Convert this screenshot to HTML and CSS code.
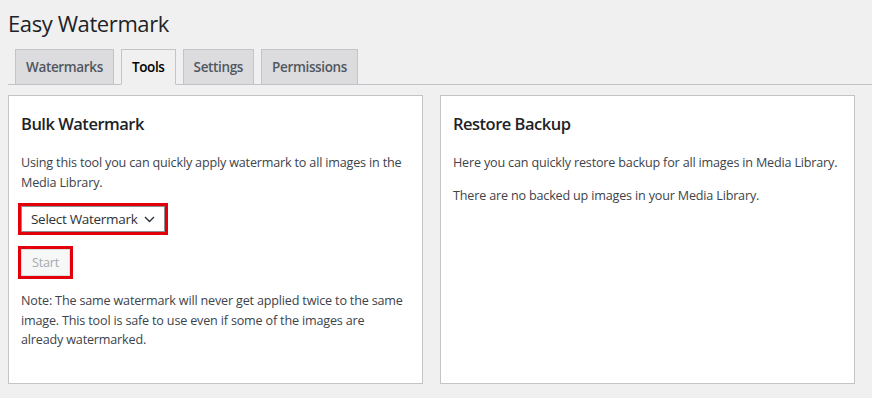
FILE: index.html
```html
<!DOCTYPE html>
<html>
<head>
<meta charset="utf-8">
<link rel="stylesheet" href="styles.css">
</head>
<body>
<div class="wrap">
  <h1 class="title">Easy Watermark</h1>
  <nav class="tabs">
    <a class="tab">Watermarks</a>
    <a class="tab active">Tools</a>
    <a class="tab">Settings</a>
    <a class="tab">Permissions</a>
  </nav>
  <div class="cols">
    <div class="card">
      <h2 class="card-title">Bulk Watermark</h2>
      <p class="desc">Using this tool you can quickly apply watermark to all images in the Media Library.</p>
      <div class="hl hl-select">
        <div class="select">
          <span>Select Watermark</span>
          <svg class="chev" width="11" height="7" viewBox="0 0 11 7"><path d="M1 1 L5.5 5.5 L10 1" fill="none" stroke="#2c3338" stroke-width="1.4"/></svg>
        </div>
      </div>
      <div class="hl hl-btn">
        <button class="btn" disabled>Start</button>
      </div>
      <p class="note">Note: The same watermark will never get applied twice to the same image. This tool is safe to use even if some of the images are already watermarked.</p>
    </div>
    <div class="card">
      <h2 class="card-title">Restore Backup</h2>
      <p class="desc">Here you can quickly restore backup for all images in Media Library.</p>
      <p class="desc2">There are no backed up images in your Media Library.</p>
    </div>
  </div>
</div>
</body>
</html>
```
FILE: styles.css
```css
html, body {
  margin: 0;
  padding: 0;
  background: #f0f0f1;
}
body {
  font-family: "Open Sans", "Noto Sans", sans-serif;
  color: #3c434a;
  font-size: 12.6px;
  letter-spacing: -0.18px;
}
.wrap {
  padding-left: 8px;
}
.title {
  margin: 0;
  padding-top: 8px;
  font-size: 22px;
  font-weight: 400;
  letter-spacing: -0.4px;
  line-height: 30px;
  color: #1d2327;
}
.tabs {
  display: flex;
  margin-top: 11px;
  border-bottom: 1px solid #c3c4c7;
}
.tab {
  margin-left: 7px;
  margin-bottom: -1px;
  padding: 5px 10px;
  border: 1px solid #c3c4c7;
  background: #dcdcde;
  color: #50575e;
  font-size: 13.5px;
  font-weight: 600;
  letter-spacing: -0.35px;
  line-height: 24px;
  white-space: nowrap;
}
.tab.active {
  background: #f0f0f1;
  border-bottom-color: #f0f0f1;
  color: #000;
}
.cols {
  display: grid;
  grid-template-columns: 1fr 1fr;
  gap: 17px;
  margin: 10px 17px 0 0;
}
.card {
  background: #fff;
  border: 1px solid #c3c4c7;
  padding: 16px 12px 33px;
}
.card-title {
  margin: 0;
  font-size: 16.5px;
  font-weight: 600;
  letter-spacing: -0.5px;
  line-height: 24px;
  color: #1d2327;
}
.desc, .desc2, .note {
  margin: 0;
  line-height: 19.5px;
}
.desc {
  margin-top: 17px;
}
.desc2 {
  margin-top: 13px;
}
.hl {
  display: flex;
}
.hl-select {
  margin-top: 14px;
}
.hl-btn {
  margin-top: 17px;
}
.select {
  display: flex;
  align-items: center;
  justify-content: space-between;
  box-sizing: border-box;
  width: 144px;
  height: 26px;
  padding: 0 9px 0 9px;
  border: 1px solid #8c8f94;
  outline: 3px solid #e3000b;
  background: #fff;
  color: #2c3338;
  font-size: 13.5px;
  letter-spacing: -0.3px;
  white-space: nowrap;
}
.chev {
  display: block;
}
.btn {
  box-sizing: border-box;
  width: 49px;
  height: 27px;
  padding: 0;
  border: 1px solid #dcdcde;
  outline: 3px solid #e3000b;
  background: #f6f7f7;
  color: #a7aaad;
  font-family: "Open Sans", "Noto Sans", sans-serif;
  font-size: 12.6px;
  letter-spacing: -0.2px;
}
.note {
  margin-top: 15px;
  max-width: 386px;
}
```
